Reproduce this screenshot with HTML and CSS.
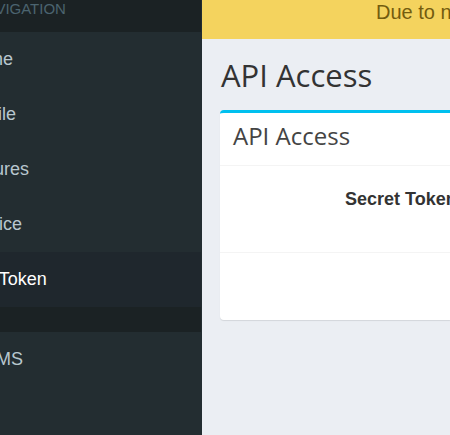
FILE: index.html
```html
<!DOCTYPE html>
<html lang="en">
<head>
<meta charset="utf-8">
<meta name="viewport" content="width=device-width, initial-scale=1">
<title>API Access</title>
<link rel="stylesheet" href="styles.css">
</head>
<body>
<div class="wrapper">
  <aside class="sidebar">
    <nav>
      <ul class="menu">
        <li class="menu-header">MAIN NAVIGATION</li>
        <li><a href="#">Home</a></li>
        <li><a href="#">Profile</a></li>
        <li><a href="#">Fixtures</a></li>
        <li><a href="#">Invoice</a></li>
        <li class="active"><a href="#">API Token</a></li>
        <li class="menu-divider"></li>
        <li><a href="#">DCIMS</a></li>
      </ul>
    </nav>
  </aside>
  <main class="content">
    <div class="notice">Due to n</div>
    <h1 class="page-title">API Access</h1>
    <section class="box">
      <h2 class="box-title">API Access</h2>
      <div class="box-body">Secret Token</div>
      <div class="box-footer"></div>
    </section>
  </main>
</div>
</body>
</html>
```
FILE: styles.css
```css
* {
  box-sizing: border-box;
}

body {
  margin: 0;
  background: #ebeef3;
  color: #333;
  font-family: "Liberation Sans", Arial, sans-serif;
  font-size: 18px;
  line-height: 25px;
}

.wrapper {
  display: flex;
  min-height: 100vh;
  overflow: hidden;
}

.sidebar {
  flex: 0 0 287px;
  margin-left: -85px;
  padding-right: 1px;
  background: #232d31;
}

.menu {
  margin: 0;
  padding: 0;
  list-style: none;
}

.menu-header {
  height: 32px;
  padding: 0 19px;
  background: #1b2224;
  color: #4b646f;
  font-size: 15px;
  line-height: 18px;
}

.menu a {
  display: block;
  padding: 15px 8px 15px 50px;
  color: #b8c7ce;
  text-decoration: none;
}

.menu .active a {
  background: #1f272d;
  color: #fff;
}

.menu-divider {
  height: 25px;
  background: #1b2224;
}

.content {
  flex: 1;
  min-width: 0;
}

.notice {
  height: 39px;
  padding-left: 174px;
  overflow: hidden;
  background: #f4d35e;
  color: #735c0f;
  font-size: 20px;
  white-space: nowrap;
}

.page-title {
  margin: 18px 19px 17px;
  font-family: "Open Sans", sans-serif;
  font-size: 31px;
  font-weight: 400;
  line-height: 36px;
}

.box {
  margin-left: 18px;
  border-top: 3px solid #00c0ef;
  border-radius: 4px 0 0 4px;
  background: #fff;
  box-shadow: 0 1px 1px rgba(0, 0, 0, 0.1);
}

.box-title {
  margin: 0;
  padding: 11px 13px 17px;
  color: #444;
  font-family: "Open Sans", sans-serif;
  font-size: 24px;
  font-weight: 400;
  line-height: 24px;
}

.box-body {
  height: 87px;
  padding: 21px 0 0 125px;
  overflow: hidden;
  border-top: 1px solid #f4f4f4;
  font-weight: 700;
  white-space: nowrap;
}

.box-footer {
  height: 68px;
  border-top: 1px solid #f4f4f4;
}
```
